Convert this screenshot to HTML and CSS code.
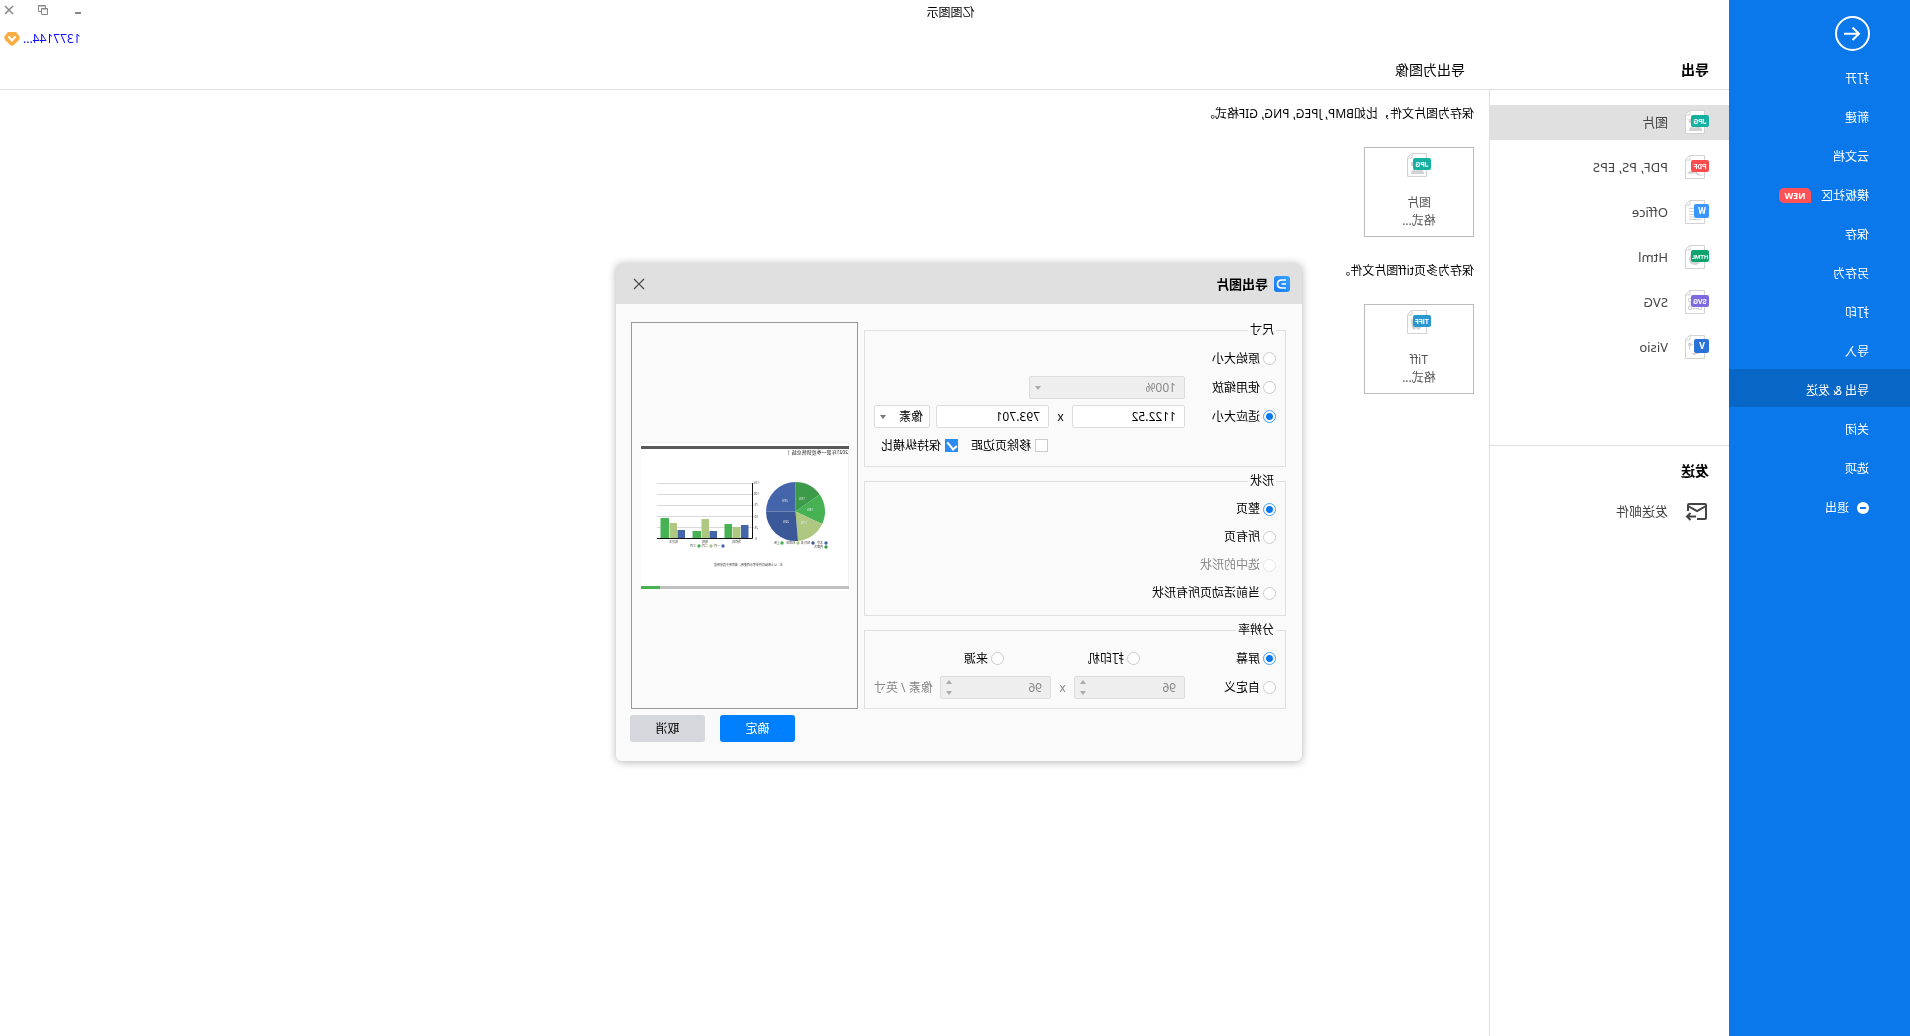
FILE: index.html
```html
<!DOCTYPE html>
<html lang="zh-CN">
<head>
<meta charset="utf-8">
<title>亿图图示</title>
<link rel="stylesheet" href="styles.css">
</head>
<body>
<svg class="defs" aria-hidden="true">
  <symbol id="page" viewBox="0 0 24 24">
    <path d="M4.500 .5H19.500L23.500 4.500V23.500H4.500Z" fill="#fff" stroke="#d2d2d2"/>
    <path d="M19 .5V5H23.500" fill="none" stroke="#d2d2d2"/>
  </symbol>
  <symbol id="jpg" viewBox="0 0 24 24">
    <use href="#page"/>
    <path d="M7 21V19L12 14L15 18L17 16L20 19V21ZM17 9H20V13H17Z" fill="#d2d2d2"/>
    <rect y="5" width="18" height="12" rx="2" fill="#14b0a0"/>
    <text x="9" y="14" class="tag">JPG</text>
  </symbol>
</svg>
<div class="app">
  <nav class="sidebar">
    <button class="back" aria-label="返回">
      <svg width="35" height="35" viewBox="0 0 35 35" fill="none" stroke="#fff" stroke-width="2"><circle cx="17.500" cy="17.500" r="16.500"/><path d="M26 17.800H11M17.500 11.500L11 17.800L17.500 24"/></svg>
    </button>
    <a href="#">打开</a>
    <a href="#">新建</a>
    <a href="#">云文档</a>
    <a href="#">模板社区<span class="badge">NEW</span></a>
    <a href="#">保存</a>
    <a href="#">另存为</a>
    <a href="#">打印</a>
    <a href="#">导入</a>
    <a href="#" class="active">导出 &amp; 发送</a>
    <a href="#">关闭</a>
    <a href="#">选项</a>
    <a href="#"><svg class="exit" width="12" height="12" viewBox="0 0 12 12"><circle cx="6" cy="6" r="6" fill="#fff"/><path d="M3 6H9" stroke="#0a78eb" stroke-width="2"/></svg>退出</a>
  </nav>

  <div class="workspace">
    <header class="topbar">
      <h1 class="app-title">亿图图示</h1>
      <div class="top-right">
        <div class="window-buttons">
          <button aria-label="最小化"><svg width="10" height="10" viewBox="0 0 10 10"><path d="M1 8H7" stroke="#888" stroke-width="2"/></svg></button>
          <button aria-label="还原"><svg width="10" height="10" viewBox="0 0 10 10" fill="none" stroke="#888"><path d="M.5 3.500H6.500V9.500H.5ZM.5 4H6.500M2.500 3V.5H9.500V6.500H7M2.500 1H9.500"/></svg></button>
          <button aria-label="关闭"><svg width="10" height="10" viewBox="0 0 10 10"><path d="M1 1L9 9M9 1L1 9" stroke="#888" stroke-width="1.500"/></svg></button>
        </div>
        <a class="account" href="#">1377144...<svg width="16" height="14" viewBox="0 0 16 14"><path d="M4 0H12L16 5L15 8L9.500 13.200Q8 14.500 6.500 13.200L1 8L0 5Z" fill="#f6ae45"/><path d="M4.500 4.500L8 8.500L11.500 4.500" fill="none" stroke="#fff" stroke-width="2"/></svg></a>
      </div>
    </header>

    <div class="headings">
      <h2 class="list-title">导出</h2>
      <h2 class="main-title">导出为图像</h2>
    </div>

    <div class="columns">
      <aside class="types">
        <div class="type-list">
          <a href="#" class="active"><svg class="doc"><use href="#jpg"/></svg>图片</a>
          <a href="#"><svg class="doc" viewBox="0 0 24 24"><use href="#page"/><path d="M6 20Q10 20 12 17L17 16Q21 16 22 18Q18 20 14 18Q11 22 6 20Z" fill="#d2d2d2"/><rect y="5" width="18" height="12" rx="2" fill="#fa4d50"/><text x="9" y="14" class="tag">PDF</text></svg>PDF, PS, EPS</a>
          <a href="#"><svg class="doc" viewBox="0 0 24 24"><use href="#page"/><path d="M15 8.500H20M15 11.500H20M15 14.500H20M8 19.500H20M15 17H20" stroke="#d2d2d2"/><rect y="4" width="15" height="14" rx="2" fill="#3a96fd"/><text x="7" y="14" class="tag letter">W</text></svg>Office</a>
          <a href="#"><svg class="doc" viewBox="0 0 24 24"><use href="#page"/><circle cx="14" cy="14" r="6" fill="#d2d2d2"/><rect y="5" width="18" height="12" rx="2" fill="#11a36d"/><text x="9" y="14" class="tag small">HTML</text></svg>Html</a>
          <a href="#"><svg class="doc" viewBox="0 0 24 24"><use href="#page"/><path d="M7.500 17V19.500H10.500V17M17.500 17V19.500H20.500V16.500H18M10.500 18.500H17.500M18 8.500H20.500V11.500H18M19 11.500V16.500" fill="none" stroke="#d2d2d2"/><rect y="5" width="18" height="12" rx="2" fill="#7e6be0"/><text x="9" y="14" class="tag">SVG</text></svg>SVG</a>
          <a href="#"><svg class="doc" viewBox="0 0 24 24"><use href="#page"/><path d="M16 9.500H19.500V15M10 18.500H17" fill="none" stroke="#d2d2d2"/><circle cx="19" cy="9.500" r="2" fill="#d2d2d2"/><path d="M12 18H17L14.500 20.500Z" fill="#d2d2d2"/><rect y="4" width="15" height="14" rx="2" fill="#2a72d8"/><text x="7" y="14" class="tag letter">V</text></svg>Visio</a>
        </div>
        <section class="send">
          <h2>发送</h2>
          <a href="#"><svg class="doc" viewBox="0 0 24 24" fill="none" stroke="#444" stroke-width="2"><path d="M12 20H4Q3 20 3 19V6Q3 5 4 5H20Q21 5 21 6V12"/><path d="M3 7L12 12L21 7"/><path d="M13 17.500H22M18.500 14L22 17.500L18.500 21"/></svg>发送邮件</a>
        </section>
      </aside>

      <main class="content">
        <p>保存为图片文件，比如BMP, JPEG, PNG, GIF格式。</p>
        <button class="card"><svg class="doc"><use href="#jpg"/></svg><span>图片<br>格式...</span></button>
        <p>保存为多页tiff图片文件。</p>
        <button class="card"><svg class="doc" viewBox="0 0 24 24"><use href="#page"/><path d="M8 9H20V12L19 18L17 20L15 18L13 20L10 18Z" fill="#d2d2d2"/><rect y="5" width="18" height="12" rx="2" fill="#2a98d0"/><text x="9" y="14" class="tag">TIFF</text></svg><span>Tiff<br>格式...</span></button>
      </main>
    </div>
  </div>

  <div class="overlay">
    <form class="dialog" role="dialog" aria-labelledby="dialog-title">
      <header class="dialog-head">
        <svg width="16" height="16" viewBox="0 0 16 16"><defs><linearGradient id="logo" x1="0" y1="0" x2="1" y2="1"><stop offset="0" stop-color="#3aa5ff"/><stop offset="1" stop-color="#1677f2"/></linearGradient></defs><rect width="16" height="16" rx="3" fill="url(#logo)"/><path d="M4 4H8Q12.500 4 12.500 8T8 12H4M4 8H8.500" fill="none" stroke="#fff" stroke-width="1.700"/></svg>
        <h2 id="dialog-title">导出图片</h2>
        <button type="button" class="close" aria-label="关闭"><svg width="12" height="12" viewBox="0 0 12 12"><path d="M1 1L11 11M11 1L1 11" stroke="#444" stroke-width="1.200"/></svg></button>
      </header>
      <div class="dialog-body">
        <div class="options">
          <fieldset>
            <legend>尺寸</legend>
            <div class="row"><label class="choice"><input type="radio" name="size">原始大小</label></div>
            <div class="row">
              <label class="choice"><input type="radio" name="size">使用缩放</label>
              <span class="picker scale"><select aria-label="缩放" disabled><option>100%</option></select><svg width="6" height="4"><path d="M0 0H6L3 4Z"/></svg></span>
            </div>
            <div class="row">
              <label class="choice"><input type="radio" name="size" checked>适应大小</label>
              <input class="field" type="text" value="1122.52" aria-label="宽度">
              <span class="times">x</span>
              <input class="field" type="text" value="793.701" aria-label="高度">
              <span class="picker unit"><select aria-label="单位"><option>像素</option></select><svg width="6" height="4"><path d="M0 0H6L3 4Z"/></svg></span>
            </div>
            <div class="row checks">
              <label><input type="checkbox">移除页边距</label>
              <label><input type="checkbox" checked>保持纵横比</label>
            </div>
          </fieldset>
          <fieldset class="shape">
            <legend>形状</legend>
            <div class="row"><label><input type="radio" name="shape" checked>整页</label></div>
            <div class="row"><label><input type="radio" name="shape">所有页</label></div>
            <div class="row"><label class="muted"><input type="radio" name="shape" disabled>选中的形状</label></div>
            <div class="row"><label><input type="radio" name="shape">当前活动页所有形状</label></div>
          </fieldset>
          <fieldset>
            <legend>分辨率</legend>
            <div class="row sources">
              <label><input type="radio" name="dpi" checked>屏幕</label>
              <label><input type="radio" name="dpi">打印机</label>
              <label><input type="radio" name="dpi">来源</label>
            </div>
            <div class="row">
              <label class="choice"><input type="radio" name="dpi">自定义</label>
              <span class="picker spin"><input type="number" value="96" aria-label="水平分辨率" disabled><svg width="6" height="15"><path d="M0 4H6L3 0ZM0 11H6L3 15Z"/></svg></span>
              <span class="times muted">x</span>
              <span class="picker spin"><input type="number" value="96" aria-label="垂直分辨率" disabled><svg width="6" height="15"><path d="M0 4H6L3 0ZM0 11H6L3 15Z"/></svg></span>
              <span class="dpi-unit muted">像素 / 英寸</span>
            </div>
          </fieldset>
        </div>
        <div class="preview">
          <svg width="208" height="148" viewBox="0 0 208 148" role="img" aria-label="预览">
            <rect width="208" height="148" fill="#fff"/>
            <path d="M0 .5H208M.5 0V148" stroke="#f0f0f0"/>
            <rect y="4" width="208" height="3" fill="#595959"/>
            <text x="1" y="12" font-size="5" fill="#222">2021年第一季度销售总结 |</text>
            <g transform="translate(53.500 69.500)">
              <path d="M0 0V-29.500A29.500 29.500 0 0 0 -24.200 -16.900Z" fill="#3c9a49"/>
              <path d="M0 0L-24.200 -16.900A29.500 29.500 0 0 0 -26.700 12.500Z" fill="#46b254"/>
              <path d="M0 0L-26.700 12.500A29.500 29.500 0 0 0 -2.500 29.400Z" fill="#aec882"/>
              <path d="M0 0L-2.500 29.400A29.500 29.500 0 0 0 29.500 0Z" fill="#3b5998"/>
              <path d="M0 0H29.500A29.500 29.500 0 0 0 0 -29.500Z" fill="#4465aa"/>
            </g>
            <g font-size="3" fill="#eee"><text x="44" y="58">15%</text><text x="36" y="69">18%</text><text x="42" y="82">17%</text><text x="60" y="81">24%</text><text x="61" y="60">25%</text></g>
            <g>
              <circle cx="23" cy="101" r="1.700" fill="#4465aa"/><circle cx="36" cy="101" r="1.700" fill="#3b5998"/><circle cx="51" cy="101" r="1.700" fill="#aec882"/><circle cx="67" cy="101" r="1.700" fill="#46b254"/><circle cx="23" cy="105" r="1.700" fill="#3c9a49"/>
              <circle cx="126" cy="104" r="1.700" fill="#4465aa"/><circle cx="138" cy="104" r="1.700" fill="#aec882"/><circle cx="150" cy="104" r="1.700" fill="#46b254"/>
            </g>
            <g font-size="3" fill="#444">
              <text x="26" y="102">北京</text><text x="39" y="102">哈尔滨</text><text x="54" y="102">石家庄</text><text x="69" y="102">重庆</text><text x="26" y="106">内蒙古</text>
              <text x="129" y="105">一月</text><text x="141" y="105">二月</text><text x="153" y="105">三月</text>
              <text x="108" y="101">洗衣机</text><text x="141" y="101">电视</text><text x="171" y="101">笔记本</text>
              <text x="90" y="42">125</text><text x="90" y="53">100</text><text x="91" y="64">75</text><text x="91" y="76">50</text><text x="91" y="87">25</text><text x="92" y="98">0</text>
              <text x="66" y="124">注：以上数据仅供参考示例使用，请勿用于其他用途</text>
            </g>
            <path d="M95 41.500H192M95 52.500H192M95 63.500H192M95 74.500H192M95 85.500H192" stroke="#d8d8d8"/>
            <path d="M180 76H188.500V96H180ZM148 89H156.500V96H148ZM117 82H124.500V96H117Z" fill="#46b254"/>
            <path d="M172 81H179.500V96H172ZM140 77H147.500V96H140ZM108.500 85H116.500V96H108.500Z" fill="#aec882"/>
            <path d="M164 88H171.500V96H164ZM132 89H139.500V96H132ZM100.500 83H108V96H100.500Z" fill="#4465aa"/>
            <path d="M96.500 41V96.500H192" fill="none" stroke="#111"/>
            <rect y="144" width="208" height="3" fill="#c0c0c0"/><rect x="189" y="144" width="19" height="3" fill="#46b254"/>
          </svg>
        </div>
      </div>
      <footer class="dialog-foot">
        <button type="submit" class="primary">确定</button>
        <button type="button">取消</button>
      </footer>
    </form>
  </div>
</div>
</body>
</html>
```
FILE: styles.css
```css
* { box-sizing: border-box; }

body {
  margin: 0;
  font: 12px/18px "Noto Sans", "Noto Sans CJK SC", sans-serif;
  font-kerning: none;
  color: #000;
  background: #fff;
}

h1, h2, p { margin: 0; font-size: 14px; font-weight: 400; }
a { color: inherit; text-decoration: none; }
button, input, select { font: inherit; color: inherit; }
button { padding: 0; border: 0; background: none; }
svg { display: block; flex: none; }
.defs { position: absolute; width: 0; height: 0; }

/* The whole interface is shown mirrored, right to left */
.app {
  position: relative;
  display: flex;
  min-height: 100vh;
  overflow: hidden;
  transform: scaleX(-1);
}

/* Sidebar */
.sidebar {
  flex: none;
  display: flex;
  flex-direction: column;
  gap: 1px;
  width: 181px;
  color: #fff;
  background: #0a78eb;
}
.back { align-self: flex-start; margin: 16px 0 5px 40px; }
.sidebar a {
  display: flex;
  align-items: center;
  height: 38px;
  padding: 5px 0 0 41px;
}
.sidebar .active { background: #0766c6; }
.badge {
  width: 32px;
  height: 15px;
  margin-left: 10px;
  border-radius: 5px 5px 5px 0;
  background: #ff5257;
  font-size: 9px;
  line-height: 15px;
  font-weight: 700;
  text-align: center;
}
.exit { margin-right: 8px; }

/* Header */
.workspace { flex: 1; display: flex; flex-direction: column; min-width: 0; }
.topbar { display: grid; grid-template-columns: 1fr 172px; height: 52px; }
.app-title { padding-top: 4px; font-size: 12px; text-align: center; }
.top-right { display: flex; flex-direction: column; align-items: flex-end; }
.window-buttons { display: flex; gap: 24px; padding: 5px 4px 0 0; }
.account {
  display: flex;
  align-items: center;
  gap: 3px;
  padding: 15px 4px 0 0;
  color: #0a0aff;
}
.headings {
  display: flex;
  height: 38px;
  padding: 9px 20px;
  border-bottom: 1px solid #e0e0e0;
}
.list-title { width: 244px; font-weight: 700; }

/* Export types */
.columns { flex: 1; display: flex; }
.types { flex: none; width: 240px; border-right: 1px solid #e0e0e0; }
.type-list {
  display: flex;
  flex-direction: column;
  gap: 10px;
  height: 356px;
  padding-top: 15px;
  border-bottom: 1px solid #e0e0e0;
}
.types a {
  display: flex;
  align-items: center;
  gap: 17px;
  height: 35px;
  padding: 0 0 1px 20px;
  font-size: 13px;
  color: #444;
}
.types .active { background: #e0e0e0; }
.doc { width: 24px; height: 24px; }
.tag {
  fill: #fff;
  font: 700 7px Roboto, sans-serif;
  text-anchor: middle;
}
.tag.small { font-size: 6px; }
.tag.letter { font-size: 9px; }
.send h2 { padding: 16px 20px 14px; font-weight: 700; }

/* Main content */
.content { padding: 15px; }
.content p { font-size: 12px; }
.card {
  display: flex;
  flex-direction: column;
  align-items: center;
  width: 110px;
  height: 90px;
  margin: 24px 0 25px;
  padding-top: 5px;
  border: 1px solid #bbb;
  color: #555;
}
.card span { margin-top: 17px; }

/* Dialog */
.overlay {
  position: absolute;
  inset: 0;
  display: grid;
  place-items: center;
  padding: 0 8px 12px 0;
}
.dialog {
  width: 686px;
  border-radius: 6px;
  background: #fafafa;
  box-shadow: 0 1px 8px rgba(0, 0, 0, .3);
}
.dialog-head {
  display: flex;
  align-items: center;
  gap: 6px;
  height: 41px;
  padding: 0 17px 0 12px;
  border-radius: 6px 6px 0 0;
  background: #e0e0e0;
}
.dialog-head h2 { flex: 1; font-size: 13px; font-weight: 700; }
.dialog-body { display: flex; gap: 6px; padding: 18px 15px 0 16px; }
.options { flex: 1; display: flex; flex-direction: column; gap: 6px; min-width: 0; }
fieldset {
  min-width: 0;
  margin: 0;
  padding: 6px 9px;
  border: 1px solid #e0e0e0;
}
legend { height: 16px; padding: 0 2px; line-height: 16px; }
.row { display: flex; align-items: center; height: 29px; }
.shape { padding-bottom: 8px; }
.shape .row { height: 28px; }
label { display: flex; align-items: center; gap: 3px; }
.choice { width: 91px; }
.muted { color: #888; }
.times { width: 23px; text-align: center; }

input[type="radio"], input[type="checkbox"] {
  appearance: none;
  flex: none;
  width: 13px;
  height: 13px;
  margin: 0;
  border: 1px solid #ccc;
  background: #fff;
}
input[type="radio"] { border-radius: 50%; }
input[type="radio"]:checked {
  border-color: #4a9df0;
  background: radial-gradient(circle, #0a78eb 3px, #fff 4px);
}
input[type="radio"]:disabled { border-color: #e8e8e8; }
input[type="checkbox"]:checked {
  border-color: #2d8cf0;
  background: #2d8cf0;
}
input[type="checkbox"]:checked::after {
  content: "";
  display: block;
  width: 4px;
  height: 8px;
  margin: 0 auto;
  border: solid #fff;
  border-width: 0 2px 2px 0;
  transform: rotate(40deg);
}

.field, .picker select, .picker input {
  width: 113px;
  height: 23px;
  margin: 0;
  padding: 0 8px;
  border: 1px solid #dcdcdf;
  border-radius: 2px;
  background: #fff;
  line-height: 20px;
}
.picker { position: relative; display: block; }
.picker select, .picker input { display: block; width: 100%; appearance: none; }
.picker input { appearance: textfield; }
.picker input::-webkit-inner-spin-button { display: none; }
.picker :disabled { background: #eee; color: #888; opacity: 1; }
.picker svg {
  position: absolute;
  right: 6px;
  top: 0;
  bottom: 0;
  margin: auto;
  fill: #777;
}
.picker :disabled + svg { fill: #aaa; }
.scale { width: 156px; }
.unit { width: 56px; margin-left: 6px; }
.unit select { padding: 0 6px; }
.spin { width: 111px; }
.checks { justify-content: flex-end; gap: 13px; padding-right: 7px; }
.checks label { gap: 4px; }
.sources label { flex: none; width: 136px; }
.sources label:last-child { width: auto; }
.dpi-unit { flex: 1; text-align: right; white-space: nowrap; }

.preview {
  flex: none;
  display: grid;
  place-items: center;
  width: 227px;
  padding-right: 2px;
  border: 1px solid #999;
}
.dialog-foot {
  display: flex;
  justify-content: flex-end;
  gap: 15px;
  padding: 6px 14px 19px;
}
.dialog-foot button {
  width: 75px;
  height: 27px;
  border-radius: 3px;
  background: #d5d7dc;
}
.dialog-foot .primary { background: #0080ff; color: #fff; }
```
